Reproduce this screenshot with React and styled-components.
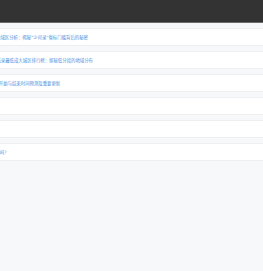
import React from 'react';
import styled, { createGlobalStyle } from 'styled-components';

const GlobalStyle = createGlobalStyle`
  html, body {
    margin: 0;
    padding: 0;
    background: #f7f8fa;
    font-family: "Noto Sans CJK SC", "Noto Sans", sans-serif;
  }
`;

const Page = styled.div`
  width: 263px;
  min-height: 271px;
  background: #f7f8fa;
  overflow: hidden;
`;

const Header = styled.div`
  height: 22px;
  background: #333333;
  border-bottom: 1px solid #6b6b6b;
`;

const List = styled.div`
  display: flex;
  flex-direction: column;
  gap: 5px;
  padding-top: 5px;
  background: #f7f8fa;
`;

const Row = styled.div`
  height: 18px;
  background: #ffffff;
  display: flex;
  align-items: center;
  border-top: 1px solid #eeeff1;
  border-bottom: 1px solid #eeeff1;
  box-sizing: border-box;
  overflow: hidden;
`;

const Title = styled.a`
  font-size: 4.4px;
  line-height: 1;
  color: #4a8fe0;
  white-space: nowrap;
  text-decoration: none;
  margin-left: ${(p) => p.$shift}px;
`;

const items = [
  { text: '地域区分析：揭秘"少司录"省标门槛背后的秘密', shift: -4 },
  { text: '最低录最低成大城区排行榜：探秘低分段的地域分布', shift: -8 },
  { text: '报名开始与结束时间预测及重要更新', shift: -10 },
  { text: '', shift: 0 },
  { text: '', shift: 0 },
  { text: '可以吗?', shift: -9 },
];

export default function App() {
  return (
    <Page>
      <GlobalStyle />
      <Header />
      <List>
        {items.map((item, i) => (
          <Row key={i}>
            {item.text && <Title $shift={item.shift}>{item.text}</Title>}
          </Row>
        ))}
      </List>
    </Page>
  );
}
